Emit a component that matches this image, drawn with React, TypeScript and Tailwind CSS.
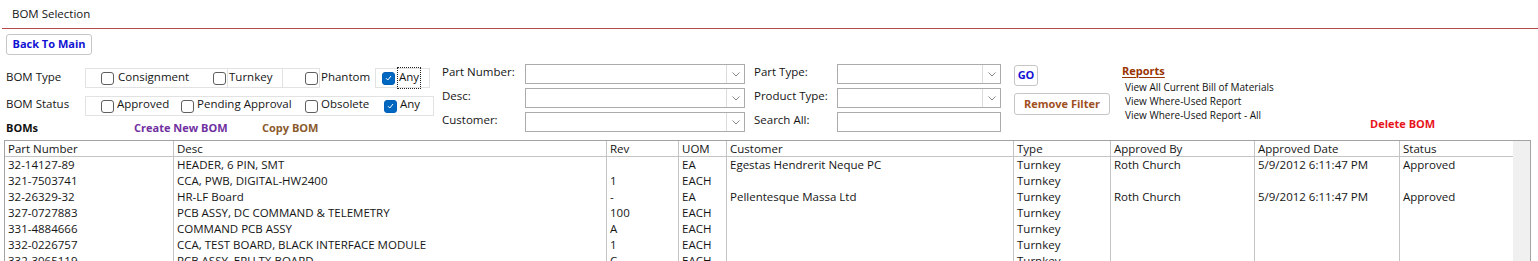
import React from "react";

function Check({ checked = false }: { checked?: boolean }) {
  return checked ? (
    <span className="inline-flex h-[13px] w-[13px] shrink-0 items-center justify-center rounded-[3px] border border-[#005fb8] bg-[#0067c0]">
      <svg width="7" height="6" viewBox="0 0 7 6" fill="none">
        <path d="M1 3.2 L2.8 5 L6 1" stroke="white" strokeWidth="1" />
      </svg>
    </span>
  ) : (
    <span className="inline-block h-[13px] w-[13px] shrink-0 rounded-[3px] border border-[#5f5f5f] bg-white" />
  );
}

function Dropdown({ w, arrow = true }: { w: string; arrow?: boolean }) {
  return (
    <div className={`flex h-[20px] ${w} border border-[#ababab] bg-white`}>
      <div className="flex-1" />
      {arrow && (
        <div className="flex w-[18px] items-center justify-center border-l border-[#dcdcdc]">
          <svg width="8" height="5" viewBox="0 0 8 5" fill="none">
            <path d="M0.5 0.5 L4 4 L7.5 0.5" stroke="#8a8a8a" strokeWidth="1" />
          </svg>
        </div>
      )}
    </div>
  );
}

const cols = [
  "Part Number",
  "Desc",
  "Rev",
  "UOM",
  "Customer",
  "Type",
  "Approved By",
  "Approved Date",
  "Status",
];

const rows: string[][] = [
  ["32-14127-89", "HEADER, 6 PIN, SMT", "", "EA", "Egestas Hendrerit Neque PC", "Turnkey", "Roth Church", "5/9/2012 6:11:47 PM", "Approved"],
  ["321-7503741", "CCA, PWB, DIGITAL-HW2400", "1", "EACH", "", "Turnkey", "", "", ""],
  ["32-26329-32", "HR-LF Board", "-", "EA", "Pellentesque Massa Ltd", "Turnkey", "Roth Church", "5/9/2012 6:11:47 PM", "Approved"],
  ["327-0727883", "PCB ASSY, DC COMMAND & TELEMETRY", "100", "EACH", "", "Turnkey", "", "", ""],
  ["331-4884666", "COMMAND PCB ASSY", "A", "EACH", "", "Turnkey", "", "", ""],
  ["332-0226757", "CCA, TEST BOARD, BLACK INTERFACE MODULE", "1", "EACH", "", "Turnkey", "", "", ""],
  ["332-3065119", "PCB ASSY, EPU TX BOARD", "C", "EACH", "", "Turnkey", "", "", ""],
];

export default function App() {
  return (
    <div
      className="h-[261px] w-[1538px] overflow-hidden bg-white text-[11.5px] text-[#151515]"
      style={{ fontFamily: '"Open Sans", "Noto Sans", sans-serif' }}
    >
      {/* Title */}
      <div className="flex h-[28px] items-center pl-[12px] pb-[1px]">BOM Selection</div>
      <div className="ml-[2px] h-px bg-[#b24a4a]" />

      {/* Back to main */}
      <div className="mt-[5px] ml-[6px] flex h-[21px] w-[86px] items-center justify-center rounded-[3px] border border-[#c6c6c6] bg-white text-[11px] font-bold text-[#1212d4]">
        Back To Main
      </div>

      {/* Filters */}
      <div className="flex h-[85px]">
        {/* Left column */}
        <div className="ml-[6px] flex w-[436px] flex-col">
          <div className="mt-[13px] flex h-[20px] items-center">
            <div className="w-[79px] pb-[3px]">BOM Type</div>
            <div className="flex h-[20px] w-[143px] items-center justify-between border border-[#e2e2e2] pl-[15px] pr-[1px]">
              <div className="flex items-center gap-[4px]">
                <Check />
                <span className="pb-[3px]">Consignment</span>
              </div>
              <Check />
            </div>
            <div className="flex h-[20px] w-[54px] items-center border-y border-[#e2e2e2] pl-[1px] pb-[3px]">Turnkey</div>
            <div className="flex h-[20px] w-[38px] items-center border border-[#e2e2e2] pl-[22px]">
              <Check />
            </div>
            <div className="flex h-[20px] w-[55px] items-center pl-[1px] pb-[3px]">Phantom</div>
            <div className="flex h-[20px] w-[55px] items-center border border-[#e2e2e2] pl-[6px]">
              <Check checked />
              <span className="ml-[2px] border border-dotted border-[#222] px-[1px] pb-[3px] leading-[17px]">Any</span>
            </div>
          </div>
          <div className="mt-[8px] flex h-[20px] items-center">
            <div className="w-[79px] pb-[4px]">BOM Status</div>
            <div className="flex h-[20px] w-[349px] items-center border border-[#e2e2e2] pl-[15px]">
              <Check />
              <span className="ml-[3px] w-[64px] pb-[4px]">Approved</span>
              <Check />
              <span className="ml-[3px] w-[108px] pb-[4px]">Pending Approval</span>
              <Check />
              <span className="ml-[3px] w-[63px] pb-[4px]">Obsolete</span>
              <Check checked />
              <span className="ml-[3px] pb-[4px]">Any</span>
            </div>
          </div>
          <div className="mt-[2px] flex h-[20px] items-center">
            <div className="w-[128px] font-bold text-[11px] text-[#111]">BOMs</div>
            <div className="w-[128px] font-bold text-[11px] text-[#7030a0]">Create New BOM</div>
            <div className="font-bold text-[11px] text-[#8a5a2c]">Copy BOM</div>
          </div>
        </div>

        {/* Middle column */}
        <div className="mt-[9px] flex flex-col gap-[4px]">
          {["Part Number:", "Desc:", "Customer:"].map((l) => (
            <div key={l} className="flex h-[20px] items-center">
              <div className="w-[83px] pb-[4px]">{l}</div>
              <Dropdown w="w-[220px]" />
            </div>
          ))}
        </div>

        {/* Right column */}
        <div className="ml-[9px] mt-[9px] flex flex-col gap-[4px]">
          {["Part Type:", "Product Type:", "Search All:"].map((l, i) => (
            <div key={l} className="flex h-[20px] items-center">
              <div className="w-[83px] pb-[4px]">{l}</div>
              <Dropdown w="w-[164px]" arrow={i < 2} />
            </div>
          ))}
        </div>

        {/* Buttons */}
        <div className="ml-[13px] flex flex-col items-start">
          <div className="mt-[10px] flex h-[21px] w-[24px] items-center justify-center rounded-[3px] border border-[#c6c6c6] text-[11px] font-bold text-[#1212d4]">
            GO
          </div>
          <div className="mt-[7px] flex h-[22px] w-[96px] items-center justify-center rounded-[3px] border border-[#c6c6c6] text-[11px] font-bold text-[#a0501e]">
            Remove Filter
          </div>
        </div>

        {/* Reports */}
        <div className="ml-[12px] flex w-[248px] flex-col">
          <div className="mt-[8px] h-[16px] leading-[16px] text-[11px] font-bold text-[#993300] underline underline-offset-2">
            Reports
          </div>
          <div className="mt-[1px] pl-[3px] text-[10px] leading-[14px] text-[#111]">
            <div>View All Current Bill of Materials</div>
            <div>View Where-Used Report</div>
            <div>View Where-Used Report - All</div>
          </div>
        </div>

        {/* Delete */}
        <div className="mt-[61px] h-[16px] leading-[16px] text-[11px] font-bold text-[#e8141b]">Delete BOM</div>
      </div>

      {/* Table */}
      <div className="ml-[4px] flex w-[1527px] border-x border-t border-[#a3a3a3]">
        <div className="grid w-[1508px] grid-cols-[168px_433px_72px_48px_287px_97px_144px_145px_114px]">
          {cols.map((c, i) => (
            <div
              key={c}
              className={`h-[16px] border-b border-[#c4c4c4] pl-[3px] leading-[15px] whitespace-nowrap ${i > 0 ? "border-l" : ""}`}
            >
              {c}
            </div>
          ))}
          {rows.map((r, ri) =>
            r.map((v, ci) => (
              <div
                key={`${ri}-${ci}`}
                className={`h-[16px] border-[#c4c4c4] pl-[3px] leading-[16px] whitespace-nowrap ${ci > 0 ? "border-l" : ""}`}
              >
                {v}
              </div>
            ))
          )}
        </div>
        <div className="w-[17px] bg-[#f0f0f0]" />
      </div>
    </div>
  );
}
